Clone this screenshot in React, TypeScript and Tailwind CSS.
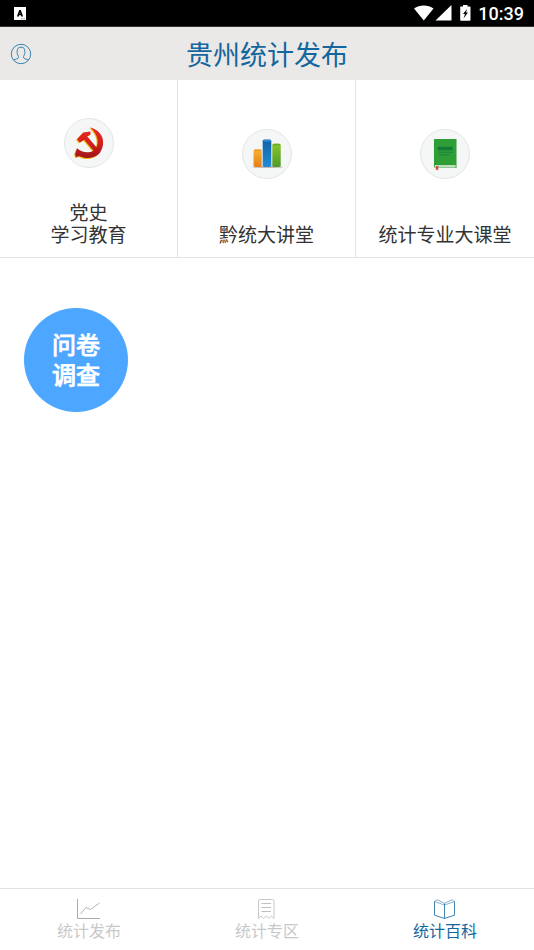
import type { ReactNode } from 'react'

function StatusBar() {
  return (
    <div className="flex h-[27px] items-center justify-between border-b border-[#333333] bg-black pr-2.5 pl-3.5 text-white">
      <svg className="h-3.5 w-3" viewBox="0 0 12 14" aria-hidden="true">
        <path d="M0 1h12v13H0z" fill="#fff" />
        <path d="M3.700 10.500 6 4.200l2.300 6.300M4.500 8.500h3" fill="none" stroke="#000" strokeWidth="1.600" strokeLinejoin="bevel" />
        <path d="M7 12.700h4" stroke="#555" strokeWidth=".7" strokeDasharray="1 .6" />
      </svg>
      <div className="flex items-center">
        <svg className="h-4 w-[58px]" viewBox="0 0 58 16" fill="#fff" aria-hidden="true">
          <path d="M0 3.500C5.500-.6 14-.6 19.500 3.500L9.800 15.600z" />
          <path d="M21.500 15.500 37.500 0v15.500z" />
          <path
            fillRule="evenodd"
            d="M49 0h4.500v1.500H56q.5 0 .5.500v13q0 .8-.8.800H47q-.8 0-.8-.8V2q0-.5.5-.5H49zM53 4l-4 5h2l-1.500 4.500 4.500-6h-2z"
          />
        </svg>
        <span className="ml-1.5 pt-px font-['Roboto',sans-serif] text-[18px] leading-6 font-medium">10:39</span>
      </div>
    </div>
  )
}

function UserIcon() {
  return (
    <svg className="size-[22px]" viewBox="0 0 22 22" fill="none" stroke="#3b83ae" strokeWidth="1" aria-hidden="true">
      <circle cx="11" cy="11" r="9.700" />
      <path d="M3.500 17c2-.9 4.900-1.200 5.100-2.700.1-1-.9-1.700-1.100-3.300-.4-.5-.7-1.400-.3-2C7 5.600 8.200 4.200 11 4.200s4 1.400 3.800 4.800c.4.600.1 1.500-.3 2-.2 1.600-1.200 2.300-1.100 3.300.2 1.500 3.100 1.800 5.100 2.700" />
    </svg>
  )
}

const SICKLE =
  'M26 8.500C36 11 41 19 39.500 27c-.5 4-2.500 7.500-5 10-5 4.500-13.500 4.500-20 1.500-1 .5-1.500 1-3 1l-1-3 2-6c5 4.500 12 5.500 17 2.500C36.500 28 35.500 16.500 26 8.500z'
const HAMMER = 'm12.500 21 6.500-7 7.500-1v3.500l-3.500 1.500L37 34.500l-3.500 3L20 21.500l-4.500 3z'

function PartyIcon() {
  return (
    <svg className="size-full" viewBox="0 0 50 50" aria-hidden="true">
      <defs>
        <linearGradient id="party" x1="0" y1="9" x2="0" y2="41" gradientUnits="userSpaceOnUse">
          <stop offset="0" stopColor="#ec2a1f" />
          <stop offset=".5" stopColor="#d2201e" />
          <stop offset="1" stopColor="#9f151c" />
        </linearGradient>
      </defs>
      <g fill="#f3b512" transform="translate(-1 1)">
        <path d={SICKLE} />
        <path d={HAMMER} />
      </g>
      <g fill="url(#party)">
        <path d={SICKLE} />
        <path d={HAMMER} />
      </g>
    </svg>
  )
}

function BarsIcon() {
  return (
    <svg className="size-full" viewBox="0 0 50 50" aria-hidden="true">
      <defs>
        <linearGradient id="orange" x1="0" y1="0" x2="0" y2="1">
          <stop offset="0" stopColor="#f9b233" />
          <stop offset="1" stopColor="#e77e17" />
        </linearGradient>
        <linearGradient id="blue" x1="0" y1="0" x2="0" y2="1">
          <stop offset="0" stopColor="#0f62a8" />
          <stop offset="1" stopColor="#238bd2" />
        </linearGradient>
        <linearGradient id="green" x1="0" y1="0" x2="0" y2="1">
          <stop offset="0" stopColor="#8ac52c" />
          <stop offset="1" stopColor="#4f9a2a" />
        </linearGradient>
      </defs>
      <ellipse cx="25.500" cy="38.500" rx="16" ry="1.200" fill="#c5b9b4" />
      <rect x="11" y="20" width="8.500" height="18.500" rx="1.800" fill="url(#orange)" />
      <rect x="20.500" y="10" width="9" height="28.500" rx="1.800" fill="url(#blue)" />
      <rect x="30.500" y="14" width="8.800" height="24.500" rx="1.800" fill="url(#green)" />
      <path d="M12 21.200h7" stroke="#e6982a" strokeWidth="1.200" />
      <path d="M21.500 11.300H29" stroke="#3a98da" strokeWidth="1.200" />
      <path d="M31.500 15.300h7" stroke="#6ba62c" strokeWidth="1.200" />
    </svg>
  )
}

function BookIcon() {
  return (
    <svg className="size-full" viewBox="0 0 50 50" aria-hidden="true">
      <path d="M13.500 9.500H37v30H15l-1.500-1z" fill="#2d9f36" />
      <path d="M14.500 36.800H36v2.200H14.500z" fill="#eef4ec" />
      <path d="M17 38h19" stroke="#a8cdaa" strokeWidth=".6" />
      <rect x="17.500" y="17.500" width="15.500" height="3.500" rx="1" fill="#147a36" />
      <rect x="18" y="22.500" width="15" height="1.500" fill="#238a3b" />
      <rect x="18" y="25" width="12" height="1.500" fill="#238a3b" />
      <path d="M15.500 37.500H18v4.700l-1.200-1-1.300.8z" fill="#d34b3e" />
    </svg>
  )
}

function CategoryCard({ icon, label }: { icon: ReactNode; label: string }) {
  return (
    <button
      type="button"
      className="flex aspect-square w-full flex-col border-r border-b border-[#e3e3e3] pb-3 text-[19px] leading-[22px] text-[#333333] last:border-r-0"
    >
      <span className="flex flex-1 items-center justify-center pt-1">
        <span className="size-[50px] overflow-hidden rounded-full border border-[#e4e6e6] bg-[#f5f6f6]">{icon}</span>
      </span>
      <span className="w-full text-center whitespace-pre-line">{label}</span>
    </button>
  )
}

const tabs = [
  {
    label: '统计发布',
    icon: (
      <>
        <path d="M.5 0v19.500H23" stroke="#aaaaaa" />
        <path d="m3.500 15 5.500-6.500 4.500 2L22.500 4" stroke="#b5b5b5" />
      </>
    ),
  },
  {
    label: '统计专区',
    icon: (
      <>
        <path d="M3.500 19.500V2Q3.500.5 5 .5h12.500Q19 .5 19 2v17.500L16.500 17l-2.700 2.500-2.600-2.500-2.600 2.500L6 17z" />
        <path d="M6.500 4.500H16M6.500 8.500H16M6.500 12.500H16" stroke="#c0c0c0" />
      </>
    ),
  },
  {
    label: '统计百科',
    icon: (
      <>
        <path d="M1.500 2.500v13.700l10 3.300 10-3.300V2.500M11.500 4.500v15" strokeOpacity=".8" />
        <path d="M1.500 2.500 4 .7l7.500 3.600L19 .7l2.500 1.800-10 3.500z" strokeOpacity=".5" />
      </>
    ),
  },
]

export default function App() {
  const active = '统计百科'

  return (
    <div className="flex min-h-screen flex-col bg-white font-['Noto_Sans_CJK_SC',sans-serif]">
      <StatusBar />
      <header className="grid h-[53px] grid-cols-[1fr_auto_1fr] items-center bg-[#ebe9e7] px-2.5">
        <button type="button" aria-label="个人中心" className="justify-self-start">
          <UserIcon />
        </button>
        <h1 className="text-[27px] leading-10 text-[#14669e]">贵州统计发布</h1>
      </header>

      <main className="flex-1">
        <section className="grid grid-cols-3">
          <CategoryCard icon={<PartyIcon />} label={'党史\n学习教育'} />
          <CategoryCard icon={<BarsIcon />} label="黔统大讲堂" />
          <CategoryCard icon={<BookIcon />} label="统计专业大课堂" />
        </section>
        <button
          type="button"
          className="mt-[50px] ml-6 flex size-[104px] items-center justify-center rounded-full bg-[#4da6ff] pb-0.5 text-[24px] leading-[30px] font-normal whitespace-pre-line text-white [-webkit-text-stroke:1px_white]"
        >
          {'问卷\n调查'}
        </button>
      </main>

      <nav className="grid grid-cols-3 border-t border-[#e3e3e3] pt-2.5 pb-[9px]">
        {tabs.map(({ label, icon }) => (
          <button
            key={label}
            type="button"
            aria-current={label === active ? 'page' : undefined}
            className={`flex flex-col items-center text-[16px] leading-[22px] ${label === active ? 'text-[#14669e]' : 'text-[#c8c8c8]'}`}
          >
            <svg className="h-5 w-6" viewBox="0 0 24 20" fill="none" stroke="currentColor" strokeWidth="1" aria-hidden="true">
              {icon}
            </svg>
            {label}
          </button>
        ))}
      </nav>
    </div>
  )
}
